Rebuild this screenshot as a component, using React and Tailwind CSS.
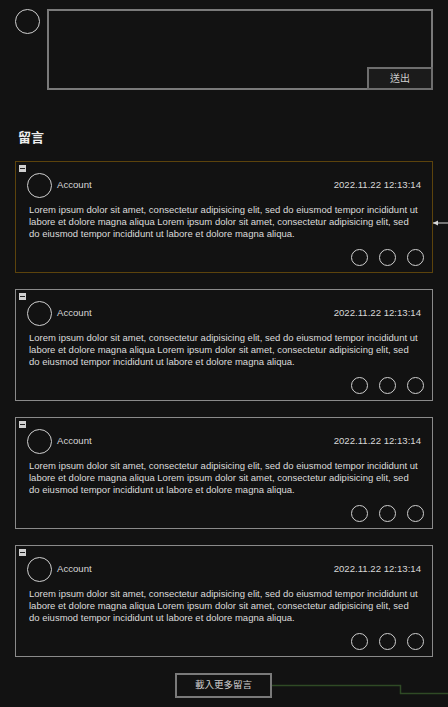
const lorem =
  "Lorem ipsum dolor sit amet, consectetur adipisicing elit, sed do eiusmod tempor incididunt ut labore et dolore magna aliqua Lorem ipsum dolor sit amet, consectetur adipisicing elit, sed do eiusmod tempor incididunt ut labore et dolore magna aliqua.";

const Comment = ({ active }) => {
  return (
    <div
      className={`relative h-[112px] w-full border ${
        active ? "border-[#5c430c]" : "border-[#8a8a8a]"
      } px-[11px] pt-[11px] flex flex-col`}
    >
      <div className="absolute top-[3px] left-[3px] h-[7px] w-[7px] bg-[#d0d0d0] flex items-center justify-center">
        <div className="h-[1px] w-[5px] bg-[#222]" />
      </div>
      <div className="flex items-center justify-between">
        <div className="flex items-center gap-[5px]">
          <div className="h-[25px] w-[25px] rounded-full border border-[#cfcfcf]" />
          <span className="text-[9.6px] text-[#d8d8d8]">Account</span>
        </div>
        <span className="text-[9.6px] text-[#d8d8d8]">2022.11.22 12:13:14</span>
      </div>
      <p className="mt-[6px] pl-[2px] text-[9.5px] leading-[12px] text-[#dcdcdc]">
        {lorem}
      </p>
      <div className="mt-auto mb-[6px] -mr-[3px] flex justify-end gap-[11px]">
        <div className="h-[17px] w-[17px] rounded-full border border-[#cfcfcf]" />
        <div className="h-[17px] w-[17px] rounded-full border border-[#cfcfcf]" />
        <div className="h-[17px] w-[17px] rounded-full border border-[#cfcfcf]" />
      </div>
    </div>
  );
};

const App = () => {
  return (
    <div
      className="relative h-[707px] w-[448px] overflow-hidden bg-[#121212]"
      style={{ fontFamily: '"Liberation Sans", "Noto Sans CJK TC", sans-serif' }}
    >
      <div className="flex gap-[7px] pl-[15px] pr-[15px] pt-[9px]">
        <div className="h-[25px] w-[25px] shrink-0 rounded-full border border-[#cfcfcf]" />
        <div className="flex h-[81px] flex-1 flex-col items-end justify-end border-2 border-[#7a7a7a]">
          <button className="-mb-[2px] -mr-[2px] flex h-[23px] w-[66px] items-center justify-center border-2 border-[#6e6e6e] bg-[#1b1b1b] text-[10px] text-[#cfcfcf]">
            送出
          </button>
        </div>
      </div>

      <div className="mt-[38px] pl-[18px] text-[13px] font-bold text-[#eeeeee]">
        留言
      </div>

      <div className="mt-[13px] flex flex-col gap-[16px] px-[15px]">
        <Comment active />
        <Comment />
        <Comment />
        <Comment />
      </div>

      <div className="mt-[16px] flex justify-center">
        <button className="-ml-[1px] flex h-[25px] w-[97px] items-center justify-center border-2 border-[#7a7a7a] text-[9.5px] text-[#cfcfcf]">
          載入更多留言
        </button>
      </div>

      {/* arrow pointing at the selected comment */}
      <svg className="absolute left-[432px] top-[218px]" width="16" height="10" viewBox="0 0 16 10">
        <path d="M1 5H16" stroke="#d8d8d8" strokeWidth="1" />
        <path d="M1 5L6 2.5V7.5Z" fill="#d8d8d8" />
      </svg>

      {/* connector line from load more button */}
      <svg className="absolute left-[272px] top-[684px]" width="176" height="12" viewBox="0 0 176 12">
        <path d="M0 1.5H128.5V9.5H176" fill="none" stroke="#2f4a25" strokeWidth="1.5" />
      </svg>
    </div>
  );
};

export default App;
